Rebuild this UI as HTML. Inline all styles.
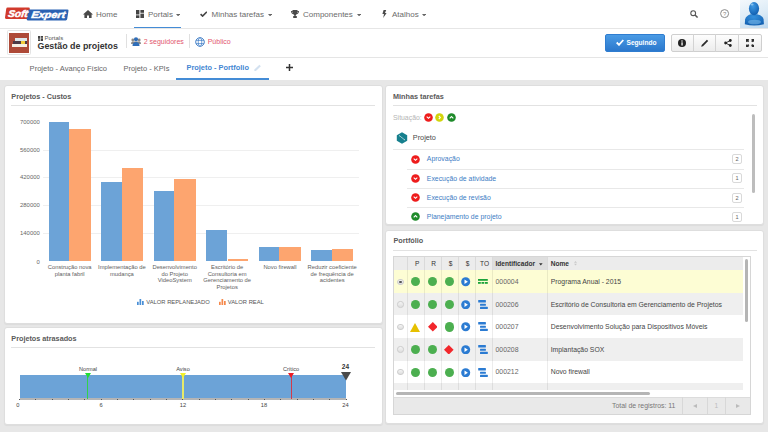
<!DOCTYPE html>
<html><head><meta charset="utf-8">
<style>
*{margin:0;padding:0;box-sizing:border-box}
html,body{width:768px;height:432px;overflow:hidden;background:#e7e7e7;font-family:"Liberation Sans",sans-serif;color:#555}
.a{position:absolute;white-space:nowrap}
#top{z-index:2;position:absolute;left:0;top:0;width:768px;height:29px;background:#fff;border-bottom:1px solid #e6e6e6}
#bar2{position:absolute;left:0;top:28px;width:768px;height:30px;background:#fff;border-bottom:1px solid #e5e5e5}
#tabs{position:absolute;left:0;top:58px;width:768px;height:22px;background:#fff}
.nav{font-size:8px;color:#6b6b6b;top:10px;line-height:9px}
.panel{position:absolute;background:#fff;border:1px solid #dedede;border-radius:3px;box-shadow:0 1px 1px rgba(0,0,0,.05)}
.ptitle{position:absolute;font-size:7.25px;font-weight:bold;color:#5a5a5a;line-height:8px}
.pline{position:absolute;height:1px;background:#e2e2e2}
.ylab{position:absolute;font-size:5.95px;color:#666;line-height:6px;text-align:right;width:30px}
.grid{position:absolute;height:1px;background:#efefef;left:42.5px;width:316px}
.bb{position:absolute;background:#6ca3d7}
.bo{position:absolute;background:#fda56f}
.xlab{position:absolute;font-size:5.8px;color:#606060;line-height:6.7px;text-align:center;width:60px;white-space:nowrap}
</style></head><body>

<!-- top nav -->
<div id="top">
  <svg class="a" style="left:0;top:0" width="72" height="24" viewBox="0 0 72 24">
    <path d="M7.6 7.6H28.6Q30 7.6 29.8 9L28.7 17.6Q28.5 19 27.1 19H6.2Q4.8 19 5 17.6L6.2 9Q6.4 7.6 7.6 7.6Z" fill="#d13a2c"/>
    <path d="M29.3 9.5H67.4Q68.7 9.5 68.5 10.8L67.2 19.1Q67 20.4 65.7 20.4H27.8Q26.5 20.4 26.7 19.1L28 10.8Q28.2 9.5 29.3 9.5Z" fill="#2a62b3"/>
    <g transform="translate(7.8 16.9) skewX(-9)"><text x="0" y="0" font-family="Liberation Sans" font-weight="bold" font-style="italic" font-size="9.8" fill="#fff" stroke="#fff" stroke-width="0.5" textLength="19.6" lengthAdjust="spacingAndGlyphs">Soft</text></g>
    <g transform="translate(31 18.2) skewX(-9)"><text x="0" y="0" font-family="Liberation Sans" font-weight="bold" font-style="italic" font-size="9.6" fill="#fff" stroke="#fff" stroke-width="0.5" textLength="33.8" lengthAdjust="spacingAndGlyphs">Expert</text></g>
  </svg>
  <svg class="a" style="left:83px;top:10px" width="10" height="8" viewBox="0 0 10 8"><path d="M5 0 L10 4.5 L8.6 4.5 L8.6 8 L6 8 L6 5.5 L4 5.5 L4 8 L1.4 8 L1.4 4.5 L0 4.5Z" fill="#4a4a4a"/></svg>
  <div class="a nav" style="left:96px">Home</div>
  <svg class="a" style="left:136px;top:10px" width="8" height="8" viewBox="0 0 8 8"><rect x="0" y="0" width="3.4" height="4.5" fill="#444"/><rect x="4.4" y="0" width="3.6" height="2.8" fill="#444"/><rect x="0" y="5.3" width="3.4" height="2.7" fill="#444"/><rect x="4.4" y="3.6" width="3.6" height="4.4" fill="#4a4a4a"/></svg>
  <div class="a nav" style="left:148px">Portals</div>
  <svg class="a" style="left:176px;top:13.6px" width="4.2" height="2.4" viewBox="0 0 4.2 2.4"><path d="M0 0H4.2L2.1 2.4Z" fill="#666"/></svg>
  <div class="a" style="left:134px;top:26.8px;width:46.5px;height:1.5px;background:#448cd6"></div>
  <svg class="a" style="left:199.5px;top:11px" width="7.5" height="6" viewBox="0 0 7.5 6"><path d="M0.6 3.1 L2.6 5.1 L6.9 0.8" stroke="#444" stroke-width="1.6" fill="none"/></svg>
  <div class="a nav" style="left:211.5px">Minhas tarefas</div>
  <svg class="a" style="left:268px;top:13.6px" width="4.2" height="2.4" viewBox="0 0 4.2 2.4"><path d="M0 0H4.2L2.1 2.4Z" fill="#666"/></svg>
  <svg class="a" style="left:291px;top:10px" width="8" height="8" viewBox="0 0 8 8"><path d="M1.5 0H6.5V1H8C8 3 7 4 5.5 4.2 5 5 4.6 5.3 4.5 6H5.8V8H2.2V6H3.5C3.4 5.3 3 5 2.5 4.2 1 4 0 3 0 1H1.5Z M1 1.8C1.2 2.6 1.6 3.1 2 3.3 1.8 2.8 1.6 2.3 1.5 1.8Z M7 1.8H6.5C6.4 2.3 6.2 2.8 6 3.3 6.4 3.1 6.8 2.6 7 1.8Z" fill="#4a4a4a"/></svg>
  <div class="a nav" style="left:303px">Componentes</div>
  <svg class="a" style="left:357px;top:13.6px" width="4.2" height="2.4" viewBox="0 0 4.2 2.4"><path d="M0 0H4.2L2.1 2.4Z" fill="#666"/></svg>
  <svg class="a" style="left:381.5px;top:10.4px" width="5" height="8" viewBox="0 0 5 8"><path d="M1.6 0H4.2L3 2.9H4.6L1.2 8L2 4H0.4Z" fill="#4a4a4a"/></svg>
  <div class="a nav" style="left:392px">Atalhos</div>
  <svg class="a" style="left:422.3px;top:13.6px" width="4.2" height="2.4" viewBox="0 0 4.2 2.4"><path d="M0 0H4.2L2.1 2.4Z" fill="#666"/></svg>

  <svg class="a" style="left:690.3px;top:10.2px" width="9" height="8" viewBox="0 0 9 8"><circle cx="3.2" cy="3.2" r="2.4" stroke="#555" stroke-width="1.1" fill="none"/><path d="M5 5 L7.6 7.5" stroke="#555" stroke-width="1.5"/></svg>
  <svg class="a" style="left:720px;top:8.5px" width="10" height="10" viewBox="0 0 10 10"><circle cx="4.6" cy="4.6" r="4" stroke="#8a8a8a" stroke-width="1" fill="none"/><text x="4.6" y="6.9" font-size="6" text-anchor="middle" font-family="Liberation Sans" fill="#888">?</text></svg>
  <div class="a" style="left:739.8px;top:0;width:28.2px;height:27.5px;background:linear-gradient(160deg,#f3f8fc 0%,#dcebf6 55%,#bcd7ee 100%)">
    <svg width="28" height="28" viewBox="0 0 28 28"><defs><radialGradient id="hg" cx="0.4" cy="0.3" r="0.75"><stop offset="0" stop-color="#3f9ae4"/><stop offset="1" stop-color="#0f5cae"/></radialGradient><radialGradient id="bg2" cx="0.45" cy="0.25" r="0.8"><stop offset="0" stop-color="#3590dc"/><stop offset="1" stop-color="#125fb0"/></radialGradient></defs>
      <path d="M10.6 14.2C8 15.3 5.6 16.4 5.1 19.6L4.8 24.2Q14 26.6 23.9 24.2L23.6 19.6C23.1 16.4 20.4 15.3 17.4 14.2Z" fill="url(#bg2)"/>
      <ellipse cx="14" cy="8.6" rx="5.1" ry="6.6" fill="url(#hg)"/>
      <ellipse cx="14.5" cy="22" rx="6.5" ry="2.3" fill="#7fbdeb" opacity=".55"/>
      <ellipse cx="12" cy="4.6" rx="1.6" ry="1" fill="#a8d6f7" opacity=".7"/></svg>
  </div>
</div>

<!-- second bar -->
<div id="bar2">
  <div class="a" style="left:6.8px;top:2.1px;width:24.6px;height:24.6px;border:1px solid #e3e3e3;border-radius:1.5px;background:#fff"></div>
  <div class="a" style="left:9px;top:4.5px;width:20px;height:20.2px;background:#ae4a38"></div>
  <div class="a" style="left:14.8px;top:10.4px;width:11.8px;height:2.4px;background:#dfe9ec"></div>
  <div class="a" style="left:13px;top:13.2px;width:13.6px;height:2.8px;background:#4d3a46"></div>
  <div class="a" style="left:21px;top:13.2px;width:3.8px;height:2.8px;background:#f2cc3a"></div>
  <div class="a" style="left:11.6px;top:16.3px;width:15px;height:2.45px;background:#f6efe4"></div>
  <svg class="a" style="left:37.5px;top:8px" width="5" height="5" viewBox="0 0 5 5"><rect x="0" y="0" width="2.2" height="2.8" fill="#444"/><rect x="2.8" y="0" width="2.2" height="1.8" fill="#444"/><rect x="0" y="3.3" width="2.2" height="1.7" fill="#444"/><rect x="2.8" y="2.3" width="2.2" height="2.7" fill="#444"/></svg>
  <div class="a" style="left:44.5px;top:7px;font-size:6px;line-height:7px;color:#555">Portals</div>
  <div class="a" style="left:37.5px;top:13px;font-size:8.9px;line-height:10px;font-weight:bold;color:#333">Gestão de projetos</div>
  <div class="a" style="left:125.5px;top:6px;width:1px;height:14px;background:#e0e0e0"></div>
  <svg class="a" style="left:131px;top:9px" width="10" height="9" viewBox="0 0 10 9"><circle cx="5" cy="2.3" r="2.1" fill="#2f6db8"/><circle cx="1.8" cy="3" r="1.4" fill="#888"/><circle cx="8.2" cy="3" r="1.4" fill="#888"/><path d="M0 7C0 5 1 4.5 2 4.5H8C9 4.5 10 5 10 7V6.5Z" fill="#888"/><path d="M1.5 9C1.5 6 3 5 5 5S8.5 6 8.5 9Z" fill="#2f6db8"/></svg>
  <div class="a" style="left:143.7px;top:9.7px;font-size:7px;line-height:8px;color:#e2566e">2 seguidores</div>
  <div class="a" style="left:189px;top:6px;width:1px;height:14px;background:#e0e0e0"></div>
  <svg class="a" style="left:195.3px;top:8.8px" width="10" height="10" viewBox="0 0 10 10"><g stroke="#3d7cc6" fill="none"><circle cx="5" cy="5" r="4.3" stroke-width="0.95"/><ellipse cx="5" cy="5" rx="1.8" ry="4.3" stroke-width="0.7"/><path d="M1 3.4H9M1 6.6H9" stroke-width="0.7"/></g></svg>
  <div class="a" style="left:207.7px;top:9.7px;font-size:7px;line-height:8px;color:#e2566e">Público</div>

  <div class="a" style="left:605.3px;top:5.6px;width:59.7px;height:18px;border-radius:2px;background:linear-gradient(#4a9be5,#2b78cd);border:1px solid #2f7dd0"></div>
  <svg class="a" style="left:615.5px;top:11px" width="8" height="7" viewBox="0 0 8 7"><path d="M0.7 3.5L3 5.8L7.3 1" stroke="#fff" stroke-width="1.8" fill="none"/></svg>
  <div class="a" style="left:626.5px;top:10.5px;font-size:6.6px;line-height:8px;font-weight:bold;color:#fff">Seguindo</div>

  <div class="a" style="left:670.5px;top:6px;width:91px;height:17.5px;border:1px solid #cfcfcf;border-radius:2px;background:linear-gradient(#fdfdfd,#ececec)"></div>
  <div class="a" style="left:692.8px;top:6px;width:1px;height:17.5px;background:#d3d3d3"></div>
  <div class="a" style="left:715.4px;top:6px;width:1px;height:17.5px;background:#d3d3d3"></div>
  <div class="a" style="left:738px;top:6px;width:1px;height:17.5px;background:#d3d3d3"></div>
  <svg class="a" style="left:678px;top:11px" width="8" height="8" viewBox="0 0 8 8"><circle cx="4" cy="4" r="4" fill="#222"/><rect x="3.4" y="3.3" width="1.3" height="3.2" fill="#fff"/><circle cx="4" cy="2.1" r="0.75" fill="#fff"/></svg>
  <svg class="a" style="left:700.6px;top:11px" width="8" height="8" viewBox="0 0 8 8"><path d="M0.2 7.8L0.7 6L5.9 0.8L7.2 2.1L2 7.3Z" fill="#2a2a2a"/></svg>
  <svg class="a" style="left:723.5px;top:11px" width="8" height="8" viewBox="0 0 8 8"><circle cx="6.3" cy="1.5" r="1.4" fill="#222"/><circle cx="6.3" cy="6.5" r="1.4" fill="#222"/><circle cx="1.6" cy="4" r="1.4" fill="#222"/><path d="M6.3 1.5L1.6 4L6.3 6.5" stroke="#222" stroke-width="0.9" fill="none"/></svg>
  <svg class="a" style="left:745.6px;top:10.8px" width="8.4" height="8.4" viewBox="0 0 8.4 8.4"><g fill="#2f2f2f"><path d="M0 0H3.2L2.4 1.2L3.3 2.1L2.1 3.3L1.2 2.4L0 3.2Z"/><path d="M8.4 0H5.2L6 1.2L5.1 2.1L6.3 3.3L7.2 2.4L8.4 3.2Z"/><path d="M0 8.4H3.2L2.4 7.2L3.3 6.3L2.1 5.1L1.2 6L0 5.2Z"/><path d="M8.4 8.4H5.2L6 7.2L5.1 6.3L6.3 5.1L7.2 6L8.4 5.2Z"/></g></svg>
</div>

<!-- tabs -->
<div id="tabs">
  <div class="a" style="left:29.6px;top:6.5px;font-size:7.55px;line-height:8px;color:#666">Projeto - Avanço Físico</div>
  <div class="a" style="left:123.5px;top:6.5px;font-size:7.45px;line-height:8px;color:#666">Projeto - KPIs</div>
  <div class="a" style="left:186.5px;top:5.5px;font-size:7.4px;line-height:8px;font-weight:bold;color:#4386d2">Projeto - Portfolio</div>
  <svg class="a" style="left:254.3px;top:5.5px" width="7.5" height="7.5" viewBox="0 0 7 7"><path d="M0.2 6.8L0.6 5L5 0.6L6.4 2L2 6.4Z" fill="#d3e1f0"/></svg>
  <div class="a" style="left:175.5px;top:20.4px;width:93px;height:1.5px;background:#448cd6"></div>
  <svg class="a" style="left:285.7px;top:6px" width="7" height="7" viewBox="0 0 7 7"><path d="M2.75 0H4.25V2.75H7V4.25H4.25V7H2.75V4.25H0V2.75H2.75Z" fill="#333"/></svg>
</div>

<!-- panel 1: Projetos - Custos -->
<div class="panel" style="left:4px;top:85px;width:378.7px;height:238.8px"></div>
<div class="ptitle" style="left:11.3px;top:92.8px">Projetos - Custos</div>
<div class="pline" style="left:11px;top:105px;width:364px"></div>

<div class="ylab" style="left:9.8px;top:118.9px">700000</div>
<div class="ylab" style="left:9.8px;top:146.6px">560000</div>
<div class="ylab" style="left:9.8px;top:174.3px">420000</div>
<div class="ylab" style="left:9.8px;top:202.0px">280000</div>
<div class="ylab" style="left:9.8px;top:229.7px">140000</div>
<div class="ylab" style="left:9.8px;top:258.6px">0</div>
<div class="grid" style="top:149.5px"></div>
<div class="grid" style="top:177.2px"></div>
<div class="grid" style="top:204.9px"></div>
<div class="grid" style="top:232.6px"></div>

<div class="bb" style="left:48.6px;top:122.0px;width:20.8px;height:138.6px"></div>
<div class="bo" style="left:69.4px;top:129.0px;width:21.4px;height:131.6px"></div>
<div class="bb" style="left:100.8px;top:181.5px;width:21.4px;height:79.1px"></div>
<div class="bo" style="left:122.2px;top:168.0px;width:20.8px;height:92.6px"></div>
<div class="bb" style="left:153.6px;top:190.8px;width:20.8px;height:69.8px"></div>
<div class="bo" style="left:174.4px;top:179.0px;width:21.4px;height:81.6px"></div>
<div class="bb" style="left:206.1px;top:229.7px;width:21.4px;height:30.9px"></div>
<div class="bo" style="left:227.5px;top:258.9px;width:20.8px;height:1.7px"></div>
<div class="bb" style="left:258.9px;top:247.2px;width:20.5px;height:13.4px"></div>
<div class="bo" style="left:279.4px;top:246.7px;width:21.7px;height:13.9px"></div>
<div class="bb" style="left:311.1px;top:250.0px;width:21.1px;height:10.6px"></div>
<div class="bo" style="left:332.2px;top:248.9px;width:21.1px;height:11.7px"></div>


<div class="xlab" style="left:39.7px;top:263.8px">Construção nova<br>planta fabril</div>
<div class="xlab" style="left:91.9px;top:263.8px">Implementação de<br>mudança</div>
<div class="xlab" style="left:144.7px;top:263.8px">Desenvolvimento<br>do Projeto<br>VideoSystem</div>
<div class="xlab" style="left:197.2px;top:263.8px">Escritório de<br>Consultoria em<br>Gerenciamento de<br>Projetos</div>
<div class="xlab" style="left:250.0px;top:263.8px">Novo firewall</div>
<div class="xlab" style="left:302.2px;top:263.8px">Reduzir coeficiente<br>de frequência de<br>acidentes</div>
<svg class="a" style="left:136.7px;top:299.3px" width="7" height="6" viewBox="0 0 7 6"><g fill="#4a8fd6"><rect x="0" y="2.8" width="1.7" height="3.2"/><rect x="2.5" y="0" width="1.7" height="6"/><rect x="5" y="2" width="1.7" height="4"/></g></svg>
<div class="a" style="left:146.3px;top:298.7px;font-size:5.8px;line-height:7px;color:#555">VALOR REPLANEJADO</div>
<svg class="a" style="left:218.5px;top:299.3px" width="7" height="6" viewBox="0 0 7 6"><g fill="#f5884a"><rect x="0" y="2.8" width="1.7" height="3.2"/><rect x="2.5" y="0" width="1.7" height="6"/><rect x="5" y="2" width="1.7" height="4"/></g></svg>
<div class="a" style="left:227.8px;top:298.7px;font-size:5.8px;line-height:7px;color:#555">VALOR REAL</div>

<!-- panel 2: Projetos atrasados -->
<div class="panel" style="left:4px;top:327px;width:378.7px;height:97.5px"></div>
<div class="ptitle" style="left:11.3px;top:334.6px">Projetos atrasados</div>
<div class="pline" style="left:11px;top:347px;width:364px"></div>
<div class="a" style="left:19.5px;top:375px;width:326.5px;height:23.5px;background:#6ca3d7"></div>
<div class="a" style="left:19.5px;top:398.3px;width:326.5px;height:1.3px;background:#b5b5b5"></div>
<div class="a" style="left:19.00px;top:398.9px;width:1px;height:1.6px;background:#555"></div>
<div class="a" style="left:35.33px;top:398.9px;width:1px;height:1.1px;background:#555"></div>
<div class="a" style="left:51.65px;top:398.9px;width:1px;height:1.1px;background:#555"></div>
<div class="a" style="left:67.97px;top:398.9px;width:1px;height:1.1px;background:#555"></div>
<div class="a" style="left:84.30px;top:398.9px;width:1px;height:1.1px;background:#555"></div>
<div class="a" style="left:100.62px;top:398.9px;width:1px;height:1.6px;background:#555"></div>
<div class="a" style="left:116.95px;top:398.9px;width:1px;height:1.1px;background:#555"></div>
<div class="a" style="left:133.28px;top:398.9px;width:1px;height:1.1px;background:#555"></div>
<div class="a" style="left:149.60px;top:398.9px;width:1px;height:1.1px;background:#555"></div>
<div class="a" style="left:165.92px;top:398.9px;width:1px;height:1.1px;background:#555"></div>
<div class="a" style="left:182.25px;top:398.9px;width:1px;height:1.6px;background:#555"></div>
<div class="a" style="left:198.57px;top:398.9px;width:1px;height:1.1px;background:#555"></div>
<div class="a" style="left:214.90px;top:398.9px;width:1px;height:1.1px;background:#555"></div>
<div class="a" style="left:231.22px;top:398.9px;width:1px;height:1.1px;background:#555"></div>
<div class="a" style="left:247.55px;top:398.9px;width:1px;height:1.1px;background:#555"></div>
<div class="a" style="left:263.88px;top:398.9px;width:1px;height:1.6px;background:#555"></div>
<div class="a" style="left:280.20px;top:398.9px;width:1px;height:1.1px;background:#555"></div>
<div class="a" style="left:296.52px;top:398.9px;width:1px;height:1.1px;background:#555"></div>
<div class="a" style="left:312.85px;top:398.9px;width:1px;height:1.1px;background:#555"></div>
<div class="a" style="left:329.18px;top:398.9px;width:1px;height:1.1px;background:#555"></div>
<div class="a" style="left:345.50px;top:398.9px;width:1px;height:1.6px;background:#555"></div>

<div class="a" style="left:87px;top:375px;width:1.2px;height:23.5px;background:#33d24a"></div>
<svg class="a" style="left:84.6px;top:372.8px" width="6" height="5" viewBox="0 0 6 5"><path d="M0 0H6L3 5Z" fill="#22dd33"/></svg>
<div class="a" style="left:182.4px;top:375px;width:1.2px;height:23.5px;background:#e6ea6a"></div>
<svg class="a" style="left:180px;top:372.8px" width="6" height="5" viewBox="0 0 6 5"><path d="M0 0H6L3 5Z" fill="#f4f22a"/></svg>
<div class="a" style="left:290.5px;top:375px;width:1.2px;height:23.5px;background:#d23a4a"></div>
<svg class="a" style="left:288px;top:372.8px" width="6" height="5" viewBox="0 0 6 5"><path d="M0 0H6L3 5Z" fill="#ee1c24"/></svg>
<div class="a" style="left:78px;top:366px;width:20px;text-align:center;font-size:5.6px;line-height:6px;color:#444">Normal</div>
<div class="a" style="left:173px;top:366px;width:20px;text-align:center;font-size:5.6px;line-height:6px;color:#444">Aviso</div>
<div class="a" style="left:281px;top:366px;width:20px;text-align:center;font-size:5.6px;line-height:6px;color:#444">Crítico</div>
<svg class="a" style="left:340.7px;top:372.2px" width="10" height="8.5" viewBox="0 0 10 8.5"><path d="M0 0H10L5 8.5Z" fill="#4a4a4a"/></svg>
<div class="a" style="left:335.4px;top:362.8px;width:20px;text-align:center;font-size:6.5px;line-height:7px;font-weight:bold;color:#333">24</div>
<div class="a" style="left:7.9px;top:402px;width:20px;text-align:center;font-size:5.7px;line-height:6px;color:#444">0</div>
<div class="a" style="left:91px;top:402px;width:20px;text-align:center;font-size:5.7px;line-height:6px;color:#444">6</div>
<div class="a" style="left:173px;top:402px;width:20px;text-align:center;font-size:5.7px;line-height:6px;color:#444">12</div>
<div class="a" style="left:254px;top:402px;width:20px;text-align:center;font-size:5.7px;line-height:6px;color:#444">18</div>
<div class="a" style="left:335.5px;top:402px;width:20px;text-align:center;font-size:5.7px;line-height:6px;color:#444">24</div>

<!-- panel 3: Minhas tarefas -->
<div class="panel" style="left:385.3px;top:85px;width:378.5px;height:140px"></div>
<div class="ptitle" style="left:393px;top:93px">Minhas tarefas</div>
<div class="pline" style="left:393px;top:105px;width:363.5px"></div>
<div class="a" style="left:393px;top:114px;font-size:6.9px;line-height:8px;color:#b5b5b5">Situação:</div>
<svg class="a" style="left:423.5px;top:113.2px" width="9" height="9" viewBox="0 0 9 9"><circle cx="4.5" cy="4.5" r="4.3" fill="#ee1c1c"/><path d="M2.7 3.6L4.5 5.3L6.3 3.6" stroke="#fff" stroke-width="1.1" fill="none"/></svg>
<svg class="a" style="left:435.3px;top:113.2px" width="9" height="9" viewBox="0 0 9 9"><circle cx="4.5" cy="4.5" r="4.3" fill="#d2d40c"/><path d="M3.8 2.9L5.3 4.5L3.8 6.1" stroke="#fff" stroke-width="1.1" fill="none"/></svg>
<svg class="a" style="left:447px;top:113.2px" width="9" height="9" viewBox="0 0 9 9"><circle cx="4.5" cy="4.5" r="4.3" fill="#1e8a2a"/><path d="M2.7 5.3L4.5 3.6L6.3 5.3" stroke="#fff" stroke-width="1.1" fill="none"/></svg>
<svg class="a" style="left:395.5px;top:131.6px" width="12" height="12" viewBox="0 0 12 12"><path d="M6 0.3L11.2 3.2V8.8L6 11.7L0.8 8.8V3.2Z" fill="#17808e"/><path d="M3.3 3.7L4.6 4.6M5.4 5.3L6.6 6.2M7.4 6.9L8.7 7.8" stroke="#fff" stroke-width="1" fill="none"/></svg>
<div class="a" style="left:412.8px;top:133.6px;font-size:7.3px;line-height:8px;color:#4a4a4a">Projeto</div>
<div class="pline" style="left:393px;top:149px;width:351px;background:#e8e8e8"></div>
<svg class="a" style="left:411.3px;top:154.8px" width="9" height="9" viewBox="0 0 9 9"><circle cx="4.5" cy="4.5" r="4.3" fill="#ee1c1c"/><path d="M2.7 3.6L4.5 5.3L6.3 3.6" stroke="#fff" stroke-width="1.1" fill="none"/></svg>
<div class="a" style="left:426.8px;top:155.3px;font-size:6.9px;line-height:8px;color:#3d7cc4">Aprovação</div>
<div class="a" style="left:732.4px;top:154.2px;width:9.4px;height:10px;border:1px solid #d9d9d9;border-radius:2px;font-size:5.6px;line-height:8px;text-align:center;color:#666">2</div>
<svg class="a" style="left:411.3px;top:174.0px" width="9" height="9" viewBox="0 0 9 9"><circle cx="4.5" cy="4.5" r="4.3" fill="#ee1c1c"/><path d="M2.7 3.6L4.5 5.3L6.3 3.6" stroke="#fff" stroke-width="1.1" fill="none"/></svg>
<div class="a" style="left:426.8px;top:174.5px;font-size:6.9px;line-height:8px;color:#3d7cc4">Execução de atividade</div>
<div class="a" style="left:732.4px;top:173.4px;width:9.4px;height:10px;border:1px solid #d9d9d9;border-radius:2px;font-size:5.6px;line-height:8px;text-align:center;color:#666">1</div>
<div class="pline" style="left:407px;top:168.7px;width:337px;background:#e8e8e8"></div>
<svg class="a" style="left:411.3px;top:193.2px" width="9" height="9" viewBox="0 0 9 9"><circle cx="4.5" cy="4.5" r="4.3" fill="#ee1c1c"/><path d="M2.7 3.6L4.5 5.3L6.3 3.6" stroke="#fff" stroke-width="1.1" fill="none"/></svg>
<div class="a" style="left:426.8px;top:193.7px;font-size:6.9px;line-height:8px;color:#3d7cc4">Execução de revisão</div>
<div class="a" style="left:732.4px;top:192.6px;width:9.4px;height:10px;border:1px solid #d9d9d9;border-radius:2px;font-size:5.6px;line-height:8px;text-align:center;color:#666">2</div>
<div class="pline" style="left:407px;top:188.0px;width:337px;background:#e8e8e8"></div>
<svg class="a" style="left:411.3px;top:212.4px" width="9" height="9" viewBox="0 0 9 9"><circle cx="4.5" cy="4.5" r="4.3" fill="#1e8a2a"/><path d="M2.7 5.3L4.5 3.6L6.3 5.3" stroke="#fff" stroke-width="1.1" fill="none"/></svg>
<div class="a" style="left:426.8px;top:212.9px;font-size:6.9px;line-height:8px;color:#3d7cc4">Planejamento de projeto</div>
<div class="a" style="left:732.4px;top:211.8px;width:9.4px;height:10px;border:1px solid #d9d9d9;border-radius:2px;font-size:5.6px;line-height:8px;text-align:center;color:#666">1</div>
<div class="pline" style="left:407px;top:207.3px;width:337px;background:#e8e8e8"></div>

<div class="a" style="left:752px;top:113.8px;width:3px;height:79.7px;background:#bdbdbd;border-radius:1.5px"></div>

<!-- panel 4: Portfólio -->
<div class="panel" style="left:385.3px;top:229.8px;width:378.5px;height:194.7px"></div>
<div class="ptitle" style="left:393.4px;top:236.6px">Portfólio</div>
<div class="pline" style="left:393px;top:249.5px;width:363.5px"></div>
<div id="tbl" class="a" style="left:393.4px;top:256.4px;width:357.6px;height:159px;border:1px solid #d6d6d6;background:#fff;overflow:hidden">
<div class="a" style="left:0;top:0;width:349px;height:12.8px;background:#ececec">
</div>
<div class="a" style="left:98.2px;top:0;width:54.8px;height:12.8px;background:#dedede">
</div>
<div class="a" style="left:14.1px;top:2.2px;width:17.2px;text-align:center;font-size:6.6px;line-height:8px;color:#333">P</div>
<div class="a" style="left:30.6px;top:2.2px;width:17.2px;text-align:center;font-size:6.6px;line-height:8px;color:#333">R</div>
<div class="a" style="left:47.6px;top:2.2px;width:17.2px;text-align:center;font-size:6.6px;line-height:8px;color:#333">$</div>
<div class="a" style="left:64.6px;top:2.2px;width:17.2px;text-align:center;font-size:6.6px;line-height:8px;color:#333">$</div>
<div class="a" style="left:81.6px;top:2.2px;width:17.2px;text-align:center;font-size:6.6px;line-height:8px;color:#333">TO</div>
<div class="a" style="left:101.1px;top:2.2px;font-size:6.6px;line-height:8px;font-weight:bold;color:#333">Identificador</div>
<svg class="a" style="left:144.8px;top:5.6px" width="4" height="3" viewBox="0 0 4 3">
<path d="M0 0.2H3.6L1.8 2.6Z" fill="#333"/>
</svg>
<div class="a" style="left:156.3px;top:2.2px;font-size:6.6px;line-height:8px;font-weight:bold;color:#333">Nome</div>
<svg class="a" style="left:179.8px;top:3.8px" width="3" height="4.5" viewBox="0 0 3 4.5">
<path d="M0 1.8H3L1.5 0Z M0 2.7H3L1.5 4.5Z" fill="#c8c8c8"/>
</svg>
<div class="a" style="left:0;top:12.8px;width:349px;height:22.6px;background:#fdfdd4">
</div>
<div class="a" style="left:0;top:35.4px;width:349px;height:22.6px;background:#efefef">
</div>
<div class="a" style="left:0;top:58.0px;width:349px;height:22.6px;background:#ffffff">
</div>
<div class="a" style="left:0;top:80.6px;width:349px;height:22.6px;background:#efefef">
</div>
<div class="a" style="left:0;top:103.2px;width:349px;height:22.6px;background:#ffffff">
</div>
<div class="a" style="left:0;top:125.8px;width:349px;height:22.6px;background:#efefef">
</div>
<div class="a" style="left:12.9px;top:0;width:1px;height:132.3px;background:rgba(0,0,0,0.075)">
</div>
<div class="a" style="left:29.9px;top:0;width:1px;height:132.3px;background:rgba(0,0,0,0.075)">
</div>
<div class="a" style="left:46.7px;top:0;width:1px;height:132.3px;background:rgba(0,0,0,0.075)">
</div>
<div class="a" style="left:63.6px;top:0;width:1px;height:132.3px;background:rgba(0,0,0,0.075)">
</div>
<div class="a" style="left:80.8px;top:0;width:1px;height:132.3px;background:rgba(0,0,0,0.075)">
</div>
<div class="a" style="left:97.7px;top:0;width:1px;height:132.3px;background:rgba(0,0,0,0.075)">
</div>
<div class="a" style="left:152.8px;top:0;width:1px;height:132.3px;background:rgba(0,0,0,0.075)">
</div>
<div class="a" style="left:3.0px;top:21.3px;width:6.4px;height:6.4px;border-radius:50%;border:0.8px solid #cdcdcd;background:linear-gradient(#f4f4f4,#dedede)">
</div>
<div class="a" style="left:4.9px;top:23.2px;width:2.6px;height:2.6px;border-radius:50%;background:#555">
</div>
<div class="a" style="left:16.5px;top:19.9px;width:9.2px;height:9.2px;border-radius:50%;background:#4caf50">
</div>
<div class="a" style="left:33.5px;top:19.9px;width:9.2px;height:9.2px;border-radius:50%;background:#4caf50">
</div>
<div class="a" style="left:50.2px;top:19.9px;width:9.2px;height:9.2px;border-radius:50%;background:#4caf50">
</div>
<svg class="a" style="left:67.0px;top:19.8px" width="9.4" height="9.4" viewBox="0 0 10 10">
<circle cx="5" cy="5" r="4.8" fill="#2b7bd2"/>
<path d="M3.7 2.6L7.3 5L3.7 7.4Z" fill="#fff"/>
</svg>
<svg class="a" style="left:83.6px;top:22.0px" width="10" height="5" viewBox="0 0 10 5">
<g fill="#1ba33a">
<rect x="0" y="0" width="9.8" height="1.8"/>
<rect x="0" y="3" width="2.8" height="1.8"/>
<rect x="3.5" y="3" width="2.8" height="1.8"/>
<rect x="7" y="3" width="2.8" height="1.8"/>
</g>
</svg>
<div class="a" style="left:101.1px;top:20.7px;font-size:6.9px;line-height:8px;color:#666">000004</div>
<div class="a" style="left:156.3px;top:20.7px;font-size:6.85px;line-height:8px;color:#444">Programa Anual - 2015</div>
<div class="a" style="left:3.0px;top:43.9px;width:6.4px;height:6.4px;border-radius:50%;border:0.8px solid #cdcdcd;background:linear-gradient(#f4f4f4,#dedede)">
</div>
<div class="a" style="left:16.5px;top:42.5px;width:9.2px;height:9.2px;border-radius:50%;background:#4caf50">
</div>
<div class="a" style="left:33.5px;top:42.5px;width:9.2px;height:9.2px;border-radius:50%;background:#4caf50">
</div>
<div class="a" style="left:50.2px;top:42.5px;width:9.2px;height:9.2px;border-radius:50%;background:#4caf50">
</div>
<svg class="a" style="left:67.0px;top:42.4px" width="9.4" height="9.4" viewBox="0 0 10 10">
<circle cx="5" cy="5" r="4.8" fill="#2b7bd2"/>
<path d="M3.7 2.6L7.3 5L3.7 7.4Z" fill="#fff"/>
</svg>
<svg class="a" style="left:83.6px;top:42.5px" width="10" height="9" viewBox="0 0 10 9">
<g fill="#2b7bd2">
<rect x="0.2" y="0" width="7.7" height="2.4" rx="0.5"/>
<rect x="2" y="3.7" width="5.9" height="2" rx="0.5"/>
<rect x="2" y="6.8" width="7.8" height="2.1" rx="0.5"/>
</g>
</svg>
<div class="a" style="left:101.1px;top:43.3px;font-size:6.9px;line-height:8px;color:#666">000206</div>
<div class="a" style="left:156.3px;top:43.3px;font-size:6.85px;line-height:8px;color:#444">Escritório de Consultoria em Gerenciamento de Projetos</div>
<div class="a" style="left:3.0px;top:66.5px;width:6.4px;height:6.4px;border-radius:50%;border:0.8px solid #cdcdcd;background:linear-gradient(#f4f4f4,#dedede)">
</div>
<svg class="a" style="left:16.1px;top:65.2px" width="10" height="9" viewBox="0 0 10 9">
<path d="M5 0L10 9H0Z" fill="#e6c000"/>
</svg>
<svg class="a" style="left:33.3px;top:64.9px" width="9.6" height="9.6" viewBox="0 0 10 10">
<path d="M5 0L10 5L5 10L0 5Z" fill="#f2272c"/>
</svg>
<div class="a" style="left:50.2px;top:65.1px;width:9.2px;height:9.2px;border-radius:50%;background:#4caf50">
</div>
<svg class="a" style="left:67.0px;top:65.0px" width="9.4" height="9.4" viewBox="0 0 10 10">
<circle cx="5" cy="5" r="4.8" fill="#2b7bd2"/>
<path d="M3.7 2.6L7.3 5L3.7 7.4Z" fill="#fff"/>
</svg>
<svg class="a" style="left:83.6px;top:65.1px" width="10" height="9" viewBox="0 0 10 9">
<g fill="#2b7bd2">
<rect x="0.2" y="0" width="7.7" height="2.4" rx="0.5"/>
<rect x="2" y="3.7" width="5.9" height="2" rx="0.5"/>
<rect x="2" y="6.8" width="7.8" height="2.1" rx="0.5"/>
</g>
</svg>
<div class="a" style="left:101.1px;top:65.9px;font-size:6.9px;line-height:8px;color:#666">000207</div>
<div class="a" style="left:156.3px;top:65.9px;font-size:6.85px;line-height:8px;color:#444">Desenvolvimento Solução para Dispositivos Móveis</div>
<div class="a" style="left:3.0px;top:89.1px;width:6.4px;height:6.4px;border-radius:50%;border:0.8px solid #cdcdcd;background:linear-gradient(#f4f4f4,#dedede)">
</div>
<div class="a" style="left:16.5px;top:87.7px;width:9.2px;height:9.2px;border-radius:50%;background:#4caf50">
</div>
<div class="a" style="left:33.5px;top:87.7px;width:9.2px;height:9.2px;border-radius:50%;background:#4caf50">
</div>
<svg class="a" style="left:50.0px;top:87.5px" width="9.6" height="9.6" viewBox="0 0 10 10">
<path d="M5 0L10 5L5 10L0 5Z" fill="#f2272c"/>
</svg>
<svg class="a" style="left:67.0px;top:87.6px" width="9.4" height="9.4" viewBox="0 0 10 10">
<circle cx="5" cy="5" r="4.8" fill="#2b7bd2"/>
<path d="M3.7 2.6L7.3 5L3.7 7.4Z" fill="#fff"/>
</svg>
<svg class="a" style="left:83.6px;top:87.7px" width="10" height="9" viewBox="0 0 10 9">
<g fill="#2b7bd2">
<rect x="0.2" y="0" width="7.7" height="2.4" rx="0.5"/>
<rect x="2" y="3.7" width="5.9" height="2" rx="0.5"/>
<rect x="2" y="6.8" width="7.8" height="2.1" rx="0.5"/>
</g>
</svg>
<div class="a" style="left:101.1px;top:88.5px;font-size:6.9px;line-height:8px;color:#666">000208</div>
<div class="a" style="left:156.3px;top:88.5px;font-size:6.85px;line-height:8px;color:#444">Implantação SOX</div>
<div class="a" style="left:3.0px;top:111.7px;width:6.4px;height:6.4px;border-radius:50%;border:0.8px solid #cdcdcd;background:linear-gradient(#f4f4f4,#dedede)">
</div>
<div class="a" style="left:16.5px;top:110.3px;width:9.2px;height:9.2px;border-radius:50%;background:#4caf50">
</div>
<div class="a" style="left:33.5px;top:110.3px;width:9.2px;height:9.2px;border-radius:50%;background:#4caf50">
</div>
<div class="a" style="left:50.2px;top:110.3px;width:9.2px;height:9.2px;border-radius:50%;background:#4caf50">
</div>
<svg class="a" style="left:67.0px;top:110.2px" width="9.4" height="9.4" viewBox="0 0 10 10">
<circle cx="5" cy="5" r="4.8" fill="#2b7bd2"/>
<path d="M3.7 2.6L7.3 5L3.7 7.4Z" fill="#fff"/>
</svg>
<svg class="a" style="left:83.6px;top:110.3px" width="10" height="9" viewBox="0 0 10 9">
<g fill="#2b7bd2">
<rect x="0.2" y="0" width="7.7" height="2.4" rx="0.5"/>
<rect x="2" y="3.7" width="5.9" height="2" rx="0.5"/>
<rect x="2" y="6.8" width="7.8" height="2.1" rx="0.5"/>
</g>
</svg>
<div class="a" style="left:101.1px;top:111.1px;font-size:6.9px;line-height:8px;color:#666">000212</div>
<div class="a" style="left:156.3px;top:111.1px;font-size:6.85px;line-height:8px;color:#444">Novo firewall</div>
<div class="a" style="left:0;top:132.3px;width:349px;height:7.8px;background:#fff">
</div>
<div class="a" style="left:1.5px;top:134.6px;width:254.3px;height:3px;border-radius:1.5px;background:#b5b5b5">
</div>
<div class="a" style="left:348.6px;top:0;width:8.0px;height:140.1px;background:#fff">
</div>
<div class="a" style="left:350.5px;top:1.5px;width:3.2px;height:63px;border-radius:1.6px;background:#b5b5b5">
</div>
<div class="a" style="left:0;top:140.1px;width:360px;height:18px;background:#e9e9e9;border-top:1px solid #dcdcdc">
</div>
<div class="a" style="left:217.6px;top:144.6px;font-size:6.9px;line-height:8px;color:#777">Total de registros: 11</div>
<div class="a" style="left:287.6px;top:140.1px;width:1px;height:18px;background:#d8d8d8">
</div>
<div class="a" style="left:312.5px;top:140.1px;width:1px;height:18px;background:#d8d8d8">
</div>
<div class="a" style="left:330.2px;top:140.1px;width:1px;height:18px;background:#d8d8d8">
</div>
<svg class="a" style="left:299.0px;top:146.6px" width="4" height="4" viewBox="0 0 4 4">
<path d="M4 0V4L0 2Z" fill="#bbb"/>
</svg>
<div class="a" style="left:316.9px;top:144.6px;width:10px;text-align:center;font-size:6.6px;line-height:8px;color:#bbb">1</div>
<svg class="a" style="left:341.6px;top:146.6px" width="4" height="4" viewBox="0 0 4 4">
<path d="M0 0V4L4 2Z" fill="#bbb"/>
</svg>
</div>

</body></html>
